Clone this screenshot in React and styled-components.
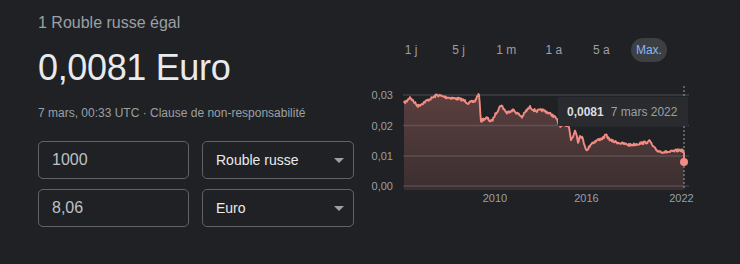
import React from "react";
import styled, { createGlobalStyle } from "styled-components";

const GlobalStyle = createGlobalStyle`
  html, body {
    margin: 0;
    background: #202124;
    height: 100%;
  }
  body {
    font-family: "Liberation Sans", Arial, sans-serif;
  }
`;

const Page = styled.div`
  display: flex;
  padding: 13px 0 0 38px;
`;

const Left = styled.div`
  width: 316px;
`;

const Title = styled.div`
  font-size: 16px;
  line-height: 20px;
  color: #9aa0a6;
`;

const Rate = styled.div`
  margin-top: 13px;
  font-size: 36px;
  line-height: 44px;
  letter-spacing: -0.35px;
  color: #e8eaed;
`;

const Meta = styled.div`
  margin-top: 15px;
  font-size: 12px;
  line-height: 16px;
  color: #9aa0a6;
`;

const Form = styled.div`
  margin-top: 20px;
  display: grid;
  grid-template-columns: 151px 152px;
  column-gap: 13px;
  row-gap: 10px;
`;

const Field = styled.div`
  box-sizing: border-box;
  height: 38px;
  border: 1px solid #5f6368;
  border-radius: 5px;
  display: flex;
  align-items: center;
  justify-content: space-between;
  padding: 0 9px 0 13px;
  color: ${(p) => (p.$select ? "#e8eaed" : "#bdc1c6")};
  font-size: ${(p) => (p.$select ? "14px" : "16px")};
`;

const Caret = styled.span`
  width: 0;
  height: 0;
  border-left: 5px solid transparent;
  border-right: 5px solid transparent;
  border-top: 5px solid #9aa0a6;
`;

const Right = styled.div`
  margin-left: 6px;
  width: 340px;
`;

const Ranges = styled.div`
  margin-top: 25px;
  padding-left: 33px;
  display: flex;
  gap: 11.6px;
`;

const Range = styled.div`
  width: 36px;
  height: 24px;
  border-radius: 12px;
  display: flex;
  align-items: center;
  justify-content: center;
  font-size: 12px;
  color: ${(p) => (p.$active ? "#8ab4f8" : "#9aa0a6")};
  background: ${(p) => (p.$active ? "#3c4043" : "transparent")};
`;

const ChartWrap = styled.div`
  margin-top: 18px;
  position: relative;
  width: 340px;
  height: 130px;
`;

const Tooltip = styled.div`
  position: absolute;
  left: 198px;
  top: 17px;
  width: 130px;
  height: 29px;
  box-sizing: border-box;
  background: #2a2b2e;
  display: flex;
  align-items: center;
  padding-left: 9px;
  gap: 7px;
  font-size: 12px;
  color: #9aa0a6;
`;

const TipValue = styled.b`
  color: #dadce0;
`;

// keypoints traced from the chart (page coords)
const keys = [
  [404, 103], [407, 101], [410, 97], [414, 102], [418, 106], [423, 103], [428, 100],
  [432, 98], [437, 95], [445, 97], [452, 98], [460, 99], [465, 101], [468, 103],
  [472, 102], [475, 101], [478, 95], [479, 95], [481, 121], [484, 119], [487, 118],
  [490, 121], [492, 121], [496, 113], [501, 105], [504, 109], [507, 113], [510, 111],
  [513, 110], [517, 113], [522, 117], [526, 111], [530, 107], [534, 110], [537, 111],
  [542, 110], [547, 112], [552, 115], [556, 118], [559, 125], [561, 126], [566, 125],
  [569, 126], [571, 140], [573, 137], [575, 130], [577, 136], [578, 142], [580, 136],
  [582, 137], [585, 146], [587, 151], [590, 145], [592, 143], [598, 140], [603, 138],
  [606, 135], [609, 139], [612, 141], [620, 143], [630, 145], [637, 144], [642, 143],
  [648, 142], [650, 141], [652, 145], [654, 148], [658, 151], [664, 152], [670, 152],
  [675, 151], [680, 150], [683, 151], [684, 153],
];

function buildLine() {
  let seed = 7;
  const rnd = () => {
    seed = (seed * 16807) % 2147483647;
    return seed / 2147483647 - 0.5;
  };
  const pts = [];
  for (let i = 0; i < keys.length - 1; i++) {
    const [x0, y0] = keys[i];
    const [x1, y1] = keys[i + 1];
    const steps = Math.max(1, Math.round((x1 - x0) * 1.5));
    for (let s = 0; s < steps; s++) {
      const t = s / steps;
      const n = i === 0 && s === 0 ? 0 : rnd() * 2.6;
      pts.push([x0 + (x1 - x0) * t - 360, y0 + (y1 - y0) * t - 80 + n]);
    }
  }
  pts.push([684 - 360, 153 - 80]);
  pts.push([684 - 360, 162 - 80]);
  return pts;
}

const linePts = buildLine();
const linePath = linePts
  .map(([x, y], i) => `${i ? "L" : "M"}${x.toFixed(2)},${y.toFixed(2)}`)
  .join(" ");
const areaPath = `${linePath} L324,110 L44,110 Z`;

const grid = [
  { y: 15, label: "0,03" },
  { y: 45.5, label: "0,02" },
  { y: 76, label: "0,01" },
  { y: 106, label: "0,00" },
];

const years = [
  { x: 135, label: "2010" },
  { x: 226.5, label: "2016" },
  { x: 321.5, label: "2022" },
];

const Chart = () => (
  <svg width="340" height="130" viewBox="0 0 340 130">
    <defs>
      <linearGradient id="fill" x1="0" y1="0" x2="0" y2="1">
        <stop offset="0" stopColor="#f28b82" stopOpacity="0.28" />
        <stop offset="1" stopColor="#f28b82" stopOpacity="0.13" />
      </linearGradient>
    </defs>
    {grid.map((g) => (
      <g key={g.label}>
        <line x1="43" x2="329" y1={g.y} y2={g.y} stroke="#3c4043" strokeWidth="1.5" />
        <text
          x="33"
          y={g.y + 4}
          textAnchor="end"
          fontSize="11"
          fill="#9aa0a6"
          fontFamily="Liberation Sans, Arial, sans-serif"
        >
          {g.label}
        </text>
      </g>
    ))}
    <path d={areaPath} fill="url(#fill)" />
    <path d={linePath} fill="none" stroke="#f28b82" strokeWidth="1.9" strokeLinejoin="round" />
    <line x1="324" x2="324" y1="6" y2="110" stroke="#9aa0a6" strokeWidth="1" strokeDasharray="2 2" />
    <circle cx="324" cy="82" r="4" fill="#f28b82" />
    {years.map((y) => (
      <text
        key={y.label}
        x={y.x}
        y="122"
        textAnchor="middle"
        fontSize="11"
        fill="#9aa0a6"
        fontFamily="Liberation Sans, Arial, sans-serif"
      >
        {y.label}
      </text>
    ))}
  </svg>
);

const ranges = ["1 j", "5 j", "1 m", "1 a", "5 a", "Max."];

const App = () => {
  return (
    <>
      <GlobalStyle />
      <Page>
        <Left>
          <Title>1 Rouble russe égal</Title>
          <Rate>0,0081 Euro</Rate>
          <Meta>7 mars, 00:33 UTC · Clause de non-responsabilité</Meta>
          <Form>
            <Field>1000</Field>
            <Field $select>
              Rouble russe
              <Caret />
            </Field>
            <Field>8,06</Field>
            <Field $select>
              Euro
              <Caret />
            </Field>
          </Form>
        </Left>
        <Right>
          <Ranges>
            {ranges.map((r) => (
              <Range key={r} $active={r === "Max."}>
                {r}
              </Range>
            ))}
          </Ranges>
          <ChartWrap>
            <Chart />
            <Tooltip>
              <TipValue>0,0081</TipValue>
              <span>7 mars 2022</span>
            </Tooltip>
          </ChartWrap>
        </Right>
      </Page>
    </>
  );
};

export default App;
